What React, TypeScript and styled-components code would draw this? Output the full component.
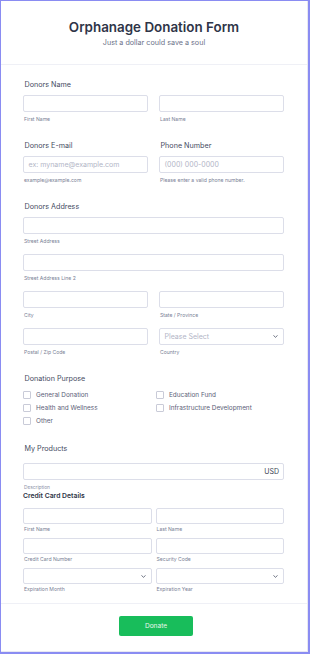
import styled, { createGlobalStyle } from 'styled-components'

const GlobalStyle = createGlobalStyle`
  html, body {
    margin: 0;
    padding: 0;
    background: #ffffff;
  }
  * {
    box-sizing: border-box;
  }
`

function Chevron(): JSX.Element {
  return (
    <svg width="5" height="3" viewBox="0 0 5 3" fill="none">
      <path d="M0.7 0.6 L2.5 2.3 L4.3 0.6" stroke="#4a5063" strokeWidth="0.8" strokeLinecap="round" strokeLinejoin="round" />
    </svg>
  )
}

type SubField = { sub: string; placeholder?: string; select?: boolean }

function Field({ sub, placeholder, select, compact }: SubField & { compact?: boolean }): JSX.Element {
  return (
    <FieldBox>
      {select ? (
        <SelectBox $compact={compact}>
          <Placeholder>{placeholder}</Placeholder>
          <Chevron />
        </SelectBox>
      ) : (
        <InputBox $compact={compact}>
          <Placeholder>{placeholder}</Placeholder>
        </InputBox>
      )}
      <SubLabel $compact={compact}>{sub}</SubLabel>
    </FieldBox>
  )
}

export default function App(): JSX.Element {
  return (
    <>
      <GlobalStyle />
      <Frame>
        <Card>
          <Header>
            <Title>Orphanage Donation Form</Title>
            <Subtitle>Just a dollar could save a soul</Subtitle>
          </Header>

          <Body>
            <Section>
              <Label>Donors Name</Label>
              <Row>
                <Field sub="First Name" />
                <Field sub="Last Name" />
              </Row>
            </Section>

            <Section>
              <Row>
                <div>
                  <Label>Donors E-mail</Label>
                  <Field sub="example@example.com" placeholder="ex: myname@example.com" />
                </div>
                <div>
                  <Label>Phone Number</Label>
                  <Field sub="Please enter a valid phone number." placeholder="(000) 000-0000" />
                </div>
              </Row>
            </Section>

            <Section>
              <Label>Donors Address</Label>
              <Stack>
                <Field sub="Street Address" />
                <Field sub="Street Address Line 2" />
                <Row>
                  <Field sub="City" />
                  <Field sub="State / Province" />
                </Row>
                <Row>
                  <Field sub="Postal / Zip Code" />
                  <Field sub="Country" placeholder="Please Select" select />
                </Row>
              </Stack>
            </Section>

            <Section>
              <Label>Donation Purpose</Label>
              <Checks>
                <CheckItem><Box />General Donation</CheckItem>
                <CheckItem><Box />Education Fund</CheckItem>
                <CheckItem><Box />Health and Wellness</CheckItem>
                <CheckItem><Box />Infrastructure Development</CheckItem>
                <CheckItem><Box />Other</CheckItem>
              </Checks>
            </Section>

            <Section>
              <Label $gap={9}>My Products</Label>
              <InputBox>
                <span />
                <Currency>USD</Currency>
              </InputBox>
              <Description>Description</Description>
              <CardTitle>Credit Card Details</CardTitle>
              <CompactGrid>
                <Field sub="First Name" compact />
                <Field sub="Last Name" compact />
                <Field sub="Credit Card Number" compact />
                <Field sub="Security Code" compact />
                <Field sub="Expiration Month" select compact />
                <Field sub="Expiration Year" select compact />
              </CompactGrid>
            </Section>
          </Body>

          <Footer>
            <DonateButton type="button">Donate</DonateButton>
          </Footer>
        </Card>
      </Frame>
    </>
  )
}

const Frame = styled.div`
  width: 310px;
  height: 654px;
  border: 1px solid #8a8cf2;
  border-right-width: 2px;
  border-bottom-width: 2px;
  display: flex;
  font-family: Inter, 'Noto Sans', sans-serif;
  color: #2c3345;
`

const Card = styled.div`
  flex: 1;
  display: flex;
  flex-direction: column;
  background: #ffffff;
  border-right: 1px solid #e8e8f1;
  border-bottom: 1px solid #e8e8f1;
`

const Header = styled.div`
  padding: 16px 0 17px;
  text-align: center;
  border-bottom: 1.5px solid #eff0f6;
`

const Title = styled.div`
  font-size: 13.4px;
  line-height: 20px;
  font-weight: 600;
  color: #2f3548;
`

const Subtitle = styled.div`
  margin-top: 1.5px;
  font-size: 7.2px;
  line-height: 8px;
  font-weight: 400;
  color: #6b7189;
`

const Body = styled.div`
  padding: 15.5px 23px 10px 22px;
  display: flex;
  flex-direction: column;
  gap: 18px;
`

const Section = styled.div`
  display: flex;
  flex-direction: column;
`

const Label = styled.div<{ $gap?: number }>`
  font-size: 7.2px;
  line-height: 10px;
  font-weight: 400;
  color: #464b5f;
  padding-left: 1.5px;
  margin-bottom: ${(p) => p.$gap ?? 5}px;
`

const Row = styled.div`
  display: grid;
  grid-template-columns: 1fr 1fr;
  column-gap: 11px;
`

const Stack = styled.div`
  display: flex;
  flex-direction: column;
  gap: 9px;
`

const FieldBox = styled.div`
  display: flex;
  flex-direction: column;
  min-width: 0;
`

const InputBox = styled.div<{ $compact?: boolean }>`
  height: ${(p) => (p.$compact ? 16 : 17)}px;
  border: 1px solid #dcdee9;
  border-radius: 2px;
  background: #ffffff;
  display: flex;
  align-items: center;
  justify-content: space-between;
  padding: 0 4px 0 4.5px;
`

const SelectBox = styled(InputBox)`
  padding-right: 5px;
`

const Placeholder = styled.span`
  font-size: 7px;
  color: #b2b5c6;
  white-space: nowrap;
`

const Currency = styled.span`
  font-size: 7px;
  color: #3a3f52;
`

const SubLabel = styled.div<{ $compact?: boolean }>`
  margin-top: ${(p) => (p.$compact ? 2 : 4)}px;
  font-size: 5.1px;
  line-height: 7px;
  color: #7a7f96;
  padding-left: 1px;
  white-space: nowrap;
`

const Checks = styled.div`
  display: grid;
  grid-template-columns: 133px 1fr;
  row-gap: 2px;
`

const CheckItem = styled.div`
  height: 11px;
  display: flex;
  align-items: center;
  gap: 5px;
  font-size: 6.4px;
  color: #5c6178;
  white-space: nowrap;
`

const Box = styled.span`
  width: 8px;
  height: 8px;
  border: 1px solid #c9cbd8;
  border-radius: 1px;
  background: #ffffff;
  flex-shrink: 0;
`

const Description = styled.div`
  margin-top: 4px;
  font-size: 4.8px;
  line-height: 6px;
  color: #8a8fa6;
  padding-left: 1px;
`

const CardTitle = styled.div`
  font-size: 6.8px;
  line-height: 10px;
  font-weight: 600;
  color: #2c3345;
  margin-top: 1px;
  margin-bottom: 7px;
`

const CompactGrid = styled.div`
  display: grid;
  grid-template-columns: 1fr 1fr;
  column-gap: 4px;
  row-gap: 5px;
`

const Footer = styled.div`
  flex: 1;
  border-top: 1.5px solid #eff0f6;
  padding-top: 12px;
  display: flex;
  justify-content: center;
  align-items: flex-start;
`

const DonateButton = styled.button`
  width: 74px;
  height: 20px;
  margin-left: 4px;
  border: none;
  border-radius: 2px;
  background: #18bd5b;
  color: #e6f7ec;
  font-family: Inter, 'Noto Sans', sans-serif;
  font-size: 6.6px;
  font-weight: 400;
  padding: 0;
`
